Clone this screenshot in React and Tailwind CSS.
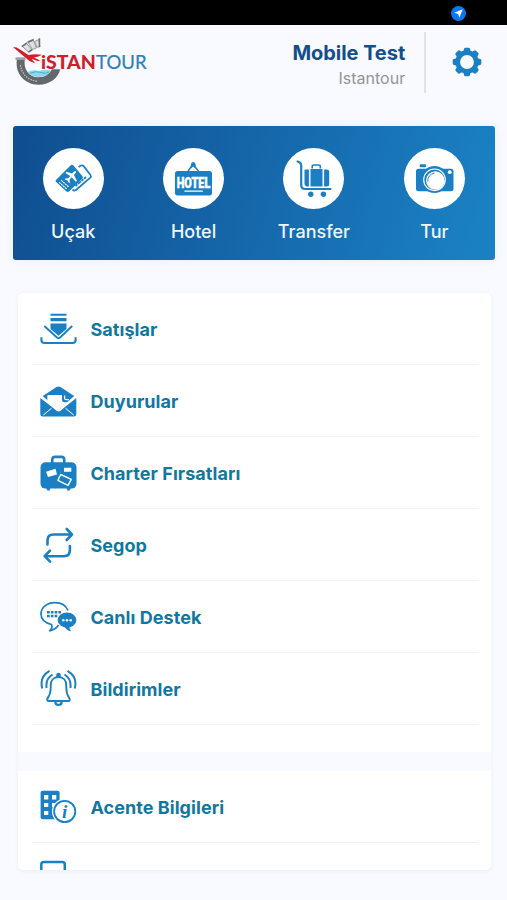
import React from 'react';

const BLUE = '#1b80c3';

function Logo() {
  return (
    <svg className="block h-[60px] w-[140px]" viewBox="10 32 140 60">
      <path d="M16.800 60 C15 74 25 84.800 38.500 84.800 C50 84.800 58.500 78 60.300 69.300 L52 69.300 C49.500 74 45 77.300 38.500 77.300 C29.500 77.300 23.500 70 24.700 60 Z" fill="#63686c" />
      <path d="M20.500 65 Q22.500 79 37 81.300" fill="none" stroke="#b4b8bb" strokeWidth="1.300" strokeDasharray="1.600 1" />
      <path d="M27.500 72 Q33 69 39 71 Q46 69 51 70.500 Q47 77 39 77 Q31 77 27.500 72Z" fill="#8fd8ea" />
      <path d="M30 73.300 Q36 70.500 41 72.500 T49 72" fill="none" stroke="#45afd2" strokeWidth="1" />
      <path d="M15.500 57.300 H25.500 V60 H15.500Z" fill="#9da1a4" />
      <g fill="#dfe1e3" stroke="#8d9194" strokeWidth="0.900">
        <path d="M22.500 46.500 L26.800 43.500 L32 50 L28.500 52Z" />
        <path d="M28.300 42.500 L33.500 40.300 L36.500 48 L32.500 49.500Z" />
        <path d="M34.500 41.500 L39 39.500 L40 46.800 L37 47.200Z" />
      </g>
      <path d="M21.800 46.500 L27 42.800 M27.500 42.300 L33.800 39.500 M39.500 38.300 V47 M28.500 52 L32.300 49.700" stroke="#6c7175" strokeWidth="1.600" />
      <path d="M13 47 Q17 47 20 49.500 L28.500 55 Q35 53.700 42 54.800 Q39 57 34 57.500 L40.500 60.800 L37.500 61 L31.500 58.800 L35.500 63.500 L29.500 61 Q22 55 13 47Z" fill="#d51e28" />
      <text x="41" y="69.200" fontFamily="Lato, sans-serif" fontWeight="900" fontSize="19.500" textLength="55" lengthAdjust="spacingAndGlyphs" fill="#cf1f2b">iSTAN</text>
      <text x="96.300" y="69.200" fontFamily="Lato, sans-serif" fontWeight="400" fontSize="19.700" textLength="50.500" lengthAdjust="spacingAndGlyphs" fill="#2a80c0" stroke="#2a80c0" strokeWidth="0.250">TOUR</text>
    </svg>
  );
}

function GearIcon() {
  return (
    <svg className="block size-[30px]" viewBox="-15 -15 30 30" fill={BLUE}>
      {[0, 45, 90, 135, 180, 225, 270, 315].map((a) => (
        <path key={a} transform={`rotate(${a})`} d="M-3.700 -10 L-2.900 -13.300 Q-2.600 -14.300 -1.600 -14.300 H1.600 Q2.600 -14.300 2.900 -13.300 L3.700 -10Z" />
      ))}
      <circle r="9.300" fill="none" stroke={BLUE} strokeWidth="4.800" />
    </svg>
  );
}

function TicketIcon() {
  return (
    <svg className="size-full" viewBox="-30.500 -30.500 61 61">
      <path d="M5 -11.500 L7.500 -13 Q9 -13.600 10 -12.600 L17 -3.500 Q18 -2 16.500 -0.500 L2.500 11.500 Q0.500 13 -1 11" fill="none" stroke={BLUE} strokeWidth="1.700" />
      <path d="M2 7.500 L12.500 -1.500" stroke={BLUE} strokeWidth="1.800" strokeDasharray="2.500 0.700 4 0.700" />
      <path d="M-17.300 1.200 L-3 -13 Q-1.500 -14.300 0 -13 L9 -2.300 Q10 -1 8.800 0.300 L-4.500 13 Q-6 14 -7.300 12.800 L-17.600 3.300 Q-18.500 2.300 -17.300 1.200Z" fill={BLUE} />
      <path d="M0 -6.500 Q2 -8 2.500 -7 Q2.800 -6 1.200 -4.500 L0.500 -3.500 L3.500 2.500 L2.200 3.300 L-1.800 -1.200 L-4 1.200 L-3.500 4 L-4.600 4.500 L-6 2 L-8.700 0.900 L-8 -0.200 L-5.500 0 L-3.300 -2.500 L-8 -5.500 L-7.200 -6.800 L-1.500 -5Z" fill="#fff" />
      <path d="M-14.300 3.800 L-7 10.300 M-12.200 1.800 L-5 8.300" stroke="#fff" strokeWidth="1.100" strokeDasharray="2 0.600" />
    </svg>
  );
}

function HotelIcon() {
  return (
    <svg className="size-full" viewBox="-30.500 -30.500 61 61">
      <path d="M-5.500 -7.500 L-0.500 -14 L5 -7.500" fill="none" stroke={BLUE} strokeWidth="1.500" />
      <path d="M-2.500 -10 Q-3.500 -16.500 -0.300 -16.500 Q3 -16.500 2 -10 L-0.300 -12Z" fill={BLUE} />
      <rect x="-18.500" y="-7.500" width="37" height="24.500" rx="2.500" fill={BLUE} />
      <text x="-16.800" y="9" fontFamily="Roboto, sans-serif" fontWeight="900" fontSize="14" textLength="33.600" lengthAdjust="spacingAndGlyphs" fill="#fff" stroke="#fff" strokeWidth="0.400">HOTEL</text>
      <path d="M-8.500 12.700 H8.800" stroke="#fff" strokeWidth="1.300" strokeLinecap="round" />
    </svg>
  );
}

function CartIcon() {
  return (
    <svg className="size-full" viewBox="-30.500 -30.500 61 61">
      <path d="M-16 -17 Q-12.500 -16.500 -12.300 -13 V6.500 Q-12.300 10.500 -8.300 10.500 H17" fill="none" stroke={BLUE} strokeWidth="2.200" strokeLinecap="round" />
      <path d="M-8.500 -9 H-4.600 V8 H-6 Q-9 8 -9 5 V-8.500Z" fill={BLUE} />
      <rect x="-3" y="-9.500" width="12" height="17.500" fill={BLUE} />
      <path d="M10.600 -9 H13.300 Q15.700 -9 15.700 -7 V6 Q15.700 8 13.300 8 H10.600Z" fill={BLUE} />
      <path d="M-1.300 -10 V-12 Q-1.300 -13.500 0.500 -13.500 H5 Q6.800 -13.500 6.800 -12 V-10" fill="none" stroke={BLUE} strokeWidth="1.600" />
      <circle cx="-2.700" cy="15.800" r="2.700" fill={BLUE} />
      <circle cx="9.900" cy="15.800" r="2.700" fill={BLUE} />
    </svg>
  );
}

function CameraIcon() {
  return (
    <svg className="size-full" viewBox="-30.500 -30.500 61 61">
      <rect x="-14.800" y="-14.300" width="6.300" height="3" rx="1" fill={BLUE} />
      <rect x="-18.500" y="-9.800" width="37.500" height="22.500" rx="2.500" fill={BLUE} />
      <circle r="13.600" cy="1" fill={BLUE} />
      <circle cy="1.300" r="10.800" fill="none" stroke="#fff" strokeWidth="1.100" />
      <circle cx="0.800" cy="2" r="9.300" fill="#fff" />
      <path d="M-6.800 3 Q-6.800 -4 0 -5.500" fill="none" stroke={BLUE} strokeWidth="0.900" />
      <circle cx="15.200" cy="-6.300" r="1.900" fill="#fff" />
    </svg>
  );
}

function RowIcon({ children }) {
  return (
    <svg className="block size-[40px] shrink-0" viewBox="0 0 40 40" fill="none" stroke={BLUE}>
      {children}
    </svg>
  );
}

const salesIcon = (
  <RowIcon>
    <path d="M12.500 5.700 H28.500" strokeWidth="2" />
    <path d="M12.500 10.600 H28.500" strokeWidth="3.200" />
    <path d="M12.500 14.500 H28.500 V20 L20.500 26.800 L12.500 20Z" fill={BLUE} stroke="none" />
    <path d="M6.300 17 L19.200 28.700 Q20.500 29.700 21.800 28.700 L34.200 17" strokeWidth="1.900" />
    <path d="M3.400 28.300 V31 Q3.400 34 6.400 34 H34.500 Q37.600 34 37.600 31 V28.300" strokeWidth="2.100" />
  </RowIcon>
);

const mailIcon = (
  <RowIcon>
    <path d="M4.800 15 L18.500 6 Q20.500 4.800 22.500 6 L36.200 15 L30.300 20.300 L20.500 28 L8.500 18.500Z" fill={BLUE} stroke="none" />
    <path d="M3.500 15.800 L18.700 28 Q20.500 29.300 22.300 28 L37.500 15.800" stroke="#fff" strokeWidth="1.400" />
    <path d="M9.300 15.200 Q9.300 14 10.500 14 H24 V18.500 Q24 21.300 26.700 21.300 H29.300 L21.500 28 H19.500 L9.300 19.500Z" fill="#fff" stroke="none" />
    <path d="M26.600 14.500 V17 Q26.600 18.700 28.300 18.700 H31" stroke="#fff" strokeWidth="1.300" />
    <path d="M2.300 17 L14 26 L18.500 29.800 Q20.500 31.200 22.500 29.800 L27 26 L38.300 17 V33 Q38.300 35.500 36 35.500 H4.700 Q2.300 35.500 2.300 33Z" fill={BLUE} stroke="none" />
    <path d="M13.500 27.300 L5.300 34 M27.500 27.300 L35.700 34" stroke="#fff" strokeWidth="1" />
  </RowIcon>
);

const suitcaseIcon = (
  <RowIcon>
    <path d="M14.300 10 V6.600 Q14.300 3.900 17.200 3.900 H23.300 Q26.200 3.900 26.200 6.600 V10" strokeWidth="2.600" />
    <rect x="2.500" y="9.300" width="36" height="26.300" rx="5" fill={BLUE} stroke="none" />
    <path d="M8.500 35 H12 L11.500 37.300 H9.500Z M29 35 H32.500 L31.500 37.300 H29.500Z" fill={BLUE} strokeWidth="0.500" />
    <path d="M8 18.700 L17.500 15.700 L19 21.500 L10 24Z M26 14.800 H33.300 V18.800 H26Z" fill="#fff" stroke="none" />
    <path d="M22.700 21.500 L33.300 26.300 L30 32.300 L19.900 27.300Z" stroke="#fff" strokeWidth="1.400" strokeLinejoin="round" />
  </RowIcon>
);

const repeatIcon = (
  <RowIcon>
    <path d="M9.500 19.500 V15.500 Q9.500 9.500 15.500 9.500 H34 M28.700 4 L34 9.500 L28.700 15" strokeWidth="2.600" strokeLinecap="round" strokeLinejoin="round" />
    <path d="M31.900 21 V25 Q31.900 31.200 25.900 31.200 H6.700 M12 25.700 L6.700 31.200 L12 36.700" strokeWidth="2.600" strokeLinecap="round" strokeLinejoin="round" />
  </RowIcon>
);

const chatIcon = (
  <RowIcon>
    <path d="M30 13.500 C28 8.500 23 5.600 17 5.600 C9 5.600 3 10.500 3 17 C3 21.700 6.700 25.800 13.500 27.500 Q15 30.800 11.700 33.800 Q17.500 32.700 20.500 28" strokeWidth="1.700" strokeLinejoin="round" />
    <path d="M9 15.300 H23 M9 19 H19.500" strokeWidth="2.400" strokeDasharray="2.700 1.100" />
    <ellipse cx="29" cy="23" rx="9.400" ry="7.500" fill={BLUE} stroke="none" />
    <path d="M26 29 Q28.500 33.500 33 34.300 Q31 32 31.500 29Z" fill={BLUE} stroke="none" />
    <circle cx="25.300" cy="23.300" r="1.250" fill="#fff" stroke="none" />
    <circle cx="29" cy="23.300" r="1.250" fill="#fff" stroke="none" />
    <circle cx="32.700" cy="23.300" r="1.250" fill="#fff" stroke="none" />
  </RowIcon>
);

const bellIcon = (
  <RowIcon>
    <path d="M20.500 8 C15.500 8 12.800 11.500 12.800 16 C12.800 23 12 26.500 9.700 29 Q8.300 32 11 32 H30 Q32.700 32 31.300 29 C29 26.500 28.200 23 28.200 16 C28.200 11.500 25.500 8 20.500 8Z" strokeWidth="1.900" />
    <path d="M18.300 8.300 V5.700 Q18.300 3.700 20.500 3.700 Q22.700 3.700 22.700 5.700 V8.300Z" fill={BLUE} stroke="none" />
    <path d="M17.300 32.500 Q17.300 36 20.500 36 Q23.700 36 23.700 32.500" strokeWidth="2.200" />
    <path d="M8.600 19 Q7.300 10 14.500 5.500 M4.300 19.500 Q1 8 11.500 1.800 M32.400 19 Q33.700 10 26.500 5.500 M36.700 19.500 Q40 8 29.500 1.800" strokeWidth="2" />
  </RowIcon>
);

const agencyIcon = (
  <RowIcon>
    <rect x="2.600" y="3.700" width="19" height="28.500" rx="2" fill={BLUE} stroke="none" />
    <path d="M6 8 H10.300 V12.500 H6Z M14 8 H18.300 V12.500 H14Z M6 16 H10.300 V20 H6Z M14 16 H18.300 V20 H14Z M6 24 H10.300 V28 H6Z" fill="#fff" stroke="none" />
    <circle cx="26.700" cy="24.500" r="12.700" fill="#fff" stroke="none" />
    <circle cx="26.700" cy="24.500" r="10.600" fill="#fff" strokeWidth="1.800" />
    <text x="26.600" y="30.700" textAnchor="middle" fontFamily="Liberation Serif, serif" fontStyle="italic" fontWeight="700" fontSize="19" fill={BLUE} stroke="none">i</text>
  </RowIcon>
);

const deviceIcon = (
  <RowIcon>
    <rect x="3.300" y="6" width="23.500" height="30" rx="2.500" strokeWidth="2.500" />
  </RowIcon>
);

const services = [
  { label: 'Uçak', icon: <TicketIcon /> },
  { label: 'Hotel', icon: <HotelIcon /> },
  { label: 'Transfer', icon: <CartIcon /> },
  { label: 'Tur', icon: <CameraIcon /> },
];

const menu = [
  { label: 'Satışlar', icon: salesIcon },
  { label: 'Duyurular', icon: mailIcon },
  { label: 'Charter Fırsatları', icon: suitcaseIcon },
  { label: 'Segop', icon: repeatIcon },
  { label: 'Canlı Destek', icon: chatIcon },
  { label: 'Bildirimler', icon: bellIcon },
];

function MenuRow({ label, icon }) {
  return (
    <div className="mr-[13px] ml-[14px] flex h-[72px] shrink-0 items-center border-b border-[#eff1f3] pl-[6px]">
      {icon}
      <span className="ml-[12.5px] pt-[2px] text-[18px] font-bold tracking-[0.05px] whitespace-nowrap text-[#10789f]">{label}</span>
    </div>
  );
}

export default function App() {
  return (
    <div className="flex h-[900px] w-[507px] flex-col overflow-hidden bg-[#f8faff] font-['Inter','Liberation_Sans',sans-serif]">
      <div className="flex h-[25px] shrink-0 items-center justify-end bg-black pt-[2px] pr-[41px]">
        <svg className="size-[15px]" viewBox="0 0 15 15">
          <circle cx="7.500" cy="7.500" r="7.500" fill="#0a78f5" />
          <path d="M11.800 3.300 L8.300 11.800 L7.200 8 L3.200 6.800Z" fill="#fff" />
        </svg>
      </div>

      <header className="flex h-[100.5px] shrink-0 pt-[7px] pl-[10px]">
        <Logo />
        <div className="ml-auto flex h-[61px] w-[277px] border-r-2 border-[#dfe2e6] pr-[19px]">
          <div className="ml-auto pt-[8px] text-right">
            <div className="text-[20px] leading-[27px] font-bold tracking-[-0.05px] whitespace-nowrap text-[#134e8c]">Mobile Test</div>
            <div className="text-[16px] leading-[22px] text-[#939598]">Istantour</div>
          </div>
        </div>
        <div className="flex h-[60px] w-[81px] items-center justify-center">
          <GearIcon />
        </div>
      </header>

      <nav className="mr-[12.5px] ml-[13px] grid h-[134.5px] shrink-0 grid-cols-4 rounded-[3px] bg-linear-[105deg,#0f4e8f_0%,#1462a5_40%,#1a80c2_95%] shadow-[0_0_8px_rgba(30,80,140,0.08)]">
        {services.map((s) => (
          <div key={s.label} className="flex flex-col items-center pt-[22.5px]">
            <div className="size-[61px] rounded-full bg-white">{s.icon}</div>
            <div className="mt-[9.5px] text-[18px] leading-[26px] font-medium text-[#f0f7ff]">{s.label}</div>
          </div>
        ))}
      </nav>

      <main className="mt-[33px] mr-[16px] ml-[18px] flex h-[577px] shrink-0 flex-col overflow-hidden rounded-[5px] bg-white shadow-[0_1px_4px_rgba(50,70,100,0.07)]">
        {menu.map((m) => (
          <MenuRow key={m.label} {...m} />
        ))}
        <div className="mt-[27px] h-[19px] shrink-0 bg-[#f8faff]" />
        <MenuRow label="Acente Bilgileri" icon={agencyIcon} />
        <div className="ml-[20px] pt-[13px]">{deviceIcon}</div>
      </main>
    </div>
  );
}
